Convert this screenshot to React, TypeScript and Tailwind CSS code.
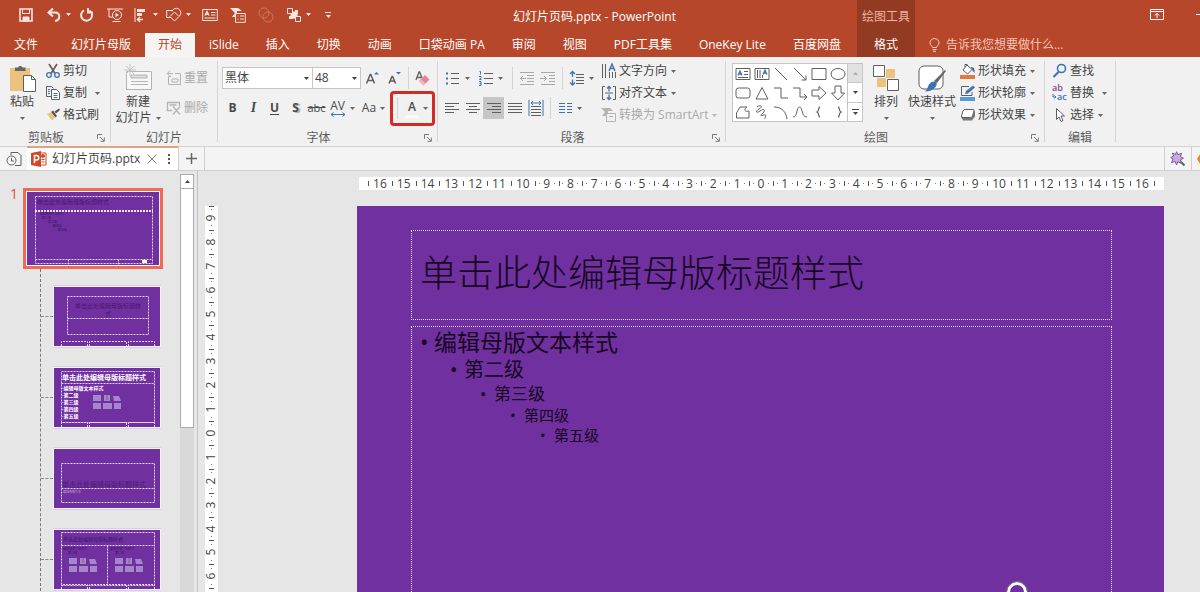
import type { ReactNode } from "react";
import clsx from "clsx";

const ink = "#5f5f5f";
const blue = "#3b74b0";
const faded = "#b4b4b4";

function Caret({ className }: { className?: string }) {
  return (
    <svg viewBox="0 0 5 3" className={clsx("w-[5px] h-[3px] shrink-0 fill-current", className)}>
      <path d="M0 0h5L2.5 3z" />
    </svg>
  );
}

function Glyph({ size = 16, children }: { size?: number; children: ReactNode }) {
  return (
    <svg width={size} height={size} viewBox={`0 0 ${size} ${size}`} fill="none" stroke={ink} className="shrink-0 overflow-visible">
      {children}
    </svg>
  );
}

function Divider() {
  return <div className="w-2 h-[22px] shrink-0 flex justify-center"><div className="w-px bg-[#d4d4d4]" /></div>;
}

/* ---------- title bar and tabs ---------- */

const quickAccess: { name: string; width: string; caret?: boolean; icon: ReactNode }[] = [
  {
    name: "保存",
    width: "w-8",
    icon: (
      <>
        <path d="M2 2h12v12H2z" strokeWidth="1.6" />
        <path d="M4.5 2v4.5h7V2" />
        <path d="M5 14v-4h6v4z" fill="currentColor" />
      </>
    ),
  },
  { name: "撤消", width: "w-8", caret: true, icon: <path d="M7 1.5 2.5 5.5 7 9.5M3 5.5h6c6 0 5.500 7.500 0 8.500" strokeWidth="2" /> },
  { name: "重复", width: "w-[26px]", icon: <path d="M10.500 3.500A5.500 5.500 0 1 1 5 3.300M9 1v4.500h5" strokeWidth="2" /> },
  {
    name: "放映",
    width: "w-[30px]",
    icon: (
      <>
        <path d="M0 2h16M2 2v8h4M5.500 14.500h8" />
        <circle cx="10" cy="8" r="4.500" />
        <path d="M8.500 5.800v4.400L12 8z" fill="currentColor" stroke="none" />
      </>
    ),
  },
  {
    name: "对齐",
    width: "w-[31px]",
    caret: true,
    icon: (
      <>
        <path d="M2 1v14" />
        <path d="M4 2h8v3H4zM4 6h5v3H4z" fill="currentColor" stroke="none" />
        <path d="M10 12.500H4.500M7 10l-2.500 2.500L7 15" strokeWidth="1.500" />
      </>
    ),
  },
  {
    name: "形状",
    width: "w-[34px]",
    caret: true,
    icon: (
      <>
        <path d="M6 3.500H.7v7H5" />
        <path d="M6 4.500a4.500 4.500 0 1 1 7.500 4.500" />
        <path d="m8.500 5 4.500 4.500L8.500 14 4 9.500z" />
      </>
    ),
  },
  {
    name: "文本框",
    width: "w-[30px]",
    icon: (
      <>
        <path d="M.7 2.500h14.600v11H.7zM9 5.500h4.500M9 8h4.500M2.500 11h11" />
        <path d="m3 8.500 2-4 2 4M3.800 7.300h2.400" strokeWidth="1.300" />
      </>
    ),
  },
  {
    name: "选择窗格",
    width: "w-[26px]",
    icon: (
      <>
        <path d="M0 1h8l4 3H7v6H2l3-4z" fill="currentColor" stroke="none" />
        <path d="M5.500 6.500h9.800v8.800H5.500zM7.500 9h1M10 9h4M7.500 12h1M10 12h4" fill="#b7472a" />
      </>
    ),
  },
  {
    name: "合并形状",
    width: "w-[30px]",
    icon: (
      <g opacity="0.300">
        <circle cx="6" cy="6" r="5" />
        <circle cx="10" cy="10" r="5" />
      </g>
    ),
  },
  {
    name: "排列",
    width: "w-[34px]",
    caret: true,
    icon: (
      <>
        <path d="M5 5h6v6H5z" fill="currentColor" />
        <path d="M1.500 1.500h5v5h-5zM9.500 9.500h5v5h-5z" fill="#b7472a" />
        <path d="M9 3h3v4h-3zM3 9h4v3H3z" fill="currentColor" stroke="none" />
      </>
    ),
  },
];

const tabs = ["幻灯片母版", "开始", "iSlide", "插入", "切换", "动画", "口袋动画 PA", "审阅", "视图", "PDF工具集", "OneKey Lite", "百度网盘"];

function Header() {
  return (
    <header className="flex h-[57px] shrink-0 bg-[#b7472a] text-white">
      <div className="flex flex-col shrink-0">
        <div className="flex items-center h-[33px] pl-2.5 pb-1 text-[#fbe6df]">
          {quickAccess.map((item) => (
            <button key={item.name} aria-label={item.name} className={clsx("flex items-center justify-center gap-1", item.width)}>
              <svg viewBox="0 0 16 16" fill="none" stroke="currentColor" className="size-4 shrink-0">
                {item.icon}
              </svg>
              {item.caret && <Caret />}
            </button>
          ))}
          <button aria-label="自定义快速访问工具栏" className="flex flex-col items-center gap-0.5 ml-1.5 w-3.5">
            <span className="w-1.5 h-px bg-current" />
            <Caret />
          </button>
          <div className="flex-1 text-center text-white leading-4 pt-1">幻灯片页码.pptx - PowerPoint</div>
        </div>
        <nav className="flex gap-px h-6">
          <button className="w-[57px] pl-3.5 text-left">文件</button>
          {tabs.map((tab) => (
            <button
              key={tab}
              className={clsx("px-[13px] whitespace-nowrap leading-5", tab === "开始" && "bg-[#f5f4f3] text-[#b7472a]")}
            >
              {tab}
            </button>
          ))}
        </nav>
      </div>
      <div className="flex flex-col w-[58px] ml-[3px] shrink-0 bg-[#933a22] text-center">
        <div className="h-[33px] leading-[34px] text-[#eeb29f]">绘图工具</div>
        <button className="h-6 leading-5">格式</button>
      </div>
      <div className="flex flex-col flex-1">
        <div className="flex items-center justify-end h-[33px] pb-1">
          <button aria-label="功能区显示选项" className="mr-8">
            <svg viewBox="0 0 14 11" fill="none" stroke="currentColor" className="w-3.5 h-[11px]">
              <path d="M.5.500h13v10H.5zM.5 2.500h13M7 9V4.500M4.800 6.500 7 4.300l2.200 2.200" />
            </svg>
          </button>
          <button aria-label="最小化" className="w-1 h-px bg-white" />
        </div>
        <label className="flex items-center h-6 pl-3.5 gap-1.5 text-[#f6d0c4]">
          <svg viewBox="0 0 11 14" fill="none" stroke="currentColor" className="w-[11px] h-3.5 shrink-0">
            <path d="M3.500 9.500C3.500 8 1 7.500 1 4.800a4.500 4.300 0 0 1 9 0C10 7.500 7.500 8 7.500 9.500zM3.500 11.500h4M4 13.300h3" />
          </svg>
          <input
            aria-label="告诉我"
            placeholder="告诉我您想要做什么..."
            className="w-36 bg-transparent outline-none placeholder:text-[#f3c5b6] placeholder:opacity-100"
          />
        </label>
      </div>
    </header>
  );
}

/* ---------- ribbon ---------- */

function Group({ label, width, launcher, children }: { label: string; width: string; launcher?: boolean; children: ReactNode }) {
  return (
    <section className={clsx("flex shrink-0", width)}>
      <div className="flex flex-col flex-1 min-w-0">
        <div className="flex h-[72px]">{children}</div>
        <div className="flex items-center h-[17px] pt-px text-[#5c5c5c]">
          <span className="flex-1 text-center">{label}</span>
          {launcher && (
            <button aria-label={`${label}设置`} className="flex justify-center w-[18px]">
              <svg viewBox="0 0 8 8" fill="none" stroke="#777" className="size-2">
                <path d="M.5 5V.5H5M3 3l4 4M7.300 3.500v3.800H3.500" />
              </svg>
            </button>
          )}
        </div>
      </div>
      <div className="w-px my-1 bg-[#d5d5d5]" />
    </section>
  );
}

function Row({ icon, label, caret, wide, disabled }: { icon: ReactNode; label: string; caret?: boolean; wide?: boolean; disabled?: boolean }) {
  return (
    <button className={clsx("flex items-center h-[22px] gap-0.5 whitespace-nowrap", disabled && "text-[#a9a9a9]")}>
      <Glyph>{icon}</Glyph>
      {label}
      {caret && <Caret className={wide ? "ml-1.5 opacity-80" : "ml-0.5 opacity-80"} />}
    </button>
  );
}

function Big({ icon, label, width, second }: { icon: ReactNode; label: string; width: string; second?: string }) {
  return (
    <button className={clsx("flex flex-col items-center pt-[7px] leading-4 shrink-0 whitespace-nowrap", width)}>
      <span className="mb-0.5">
        <Glyph size={28}>{icon}</Glyph>
      </span>
      {label}
      <span className="flex items-center gap-1 h-4">
        {second}
        <Caret className="opacity-80" />
      </span>
    </button>
  );
}

function Tool({ name, width = "w-[21px]", caret, active, children }: { name: string; width?: string; caret?: boolean; active?: boolean; children: ReactNode }) {
  return (
    <button aria-label={name} className={clsx("flex items-center justify-center gap-1 h-[22px] shrink-0", width, active && "bg-[#c6c6c6]")}>
      {children}
      {caret && <Caret className="opacity-80" />}
    </button>
  );
}

function Clipboard() {
  return (
    <Group label="剪贴板" width="w-[111px]" launcher>
      <Big
        width="w-9 ml-1"
        label="粘贴"
        icon={
          <>
            <path d="M2 4h20v23H2z" fill="#ecc37c" stroke="none" />
            <path d="M7 7V3.500h3a2.500 2.500 0 0 1 4.500 0h3V7z" fill="#666" stroke="none" />
            <path d="M15.500 11.500h8l4 4v12h-12z" fill="#fff" />
            <path d="M23.500 11.500v4h4" />
          </>
        }
      />
      <div className="pt-[3px] ml-[5px]">
        <Row
          label="剪切"
          icon={
            <>
              <path d="m4 1 6 9.500M12 1 6 10.500" strokeWidth="1.700" />
              <circle cx="4" cy="12" r="2.300" stroke={blue} strokeWidth="1.300" />
              <circle cx="12" cy="12" r="2.300" stroke={blue} strokeWidth="1.300" />
            </>
          }
        />
        <Row
          label="复制"
          caret
          wide
          icon={
            <>
              <path d="M6 11.500H1.500v-10h5l2 2" />
              <path d="M6.500 4.500h5l3 3v7h-8z" fill="#fff" />
              <path d="M3 4.500h2M3 6.500h2M3 8.500h2M8.500 8.500h4M8.500 10.500h4M8.500 12.500h4" stroke={blue} />
            </>
          }
        />
        <Row
          label="格式刷"
          icon={
            <>
              <path d="m2 7 5 6.500 3-3L6 5.500z" fill="#ecc37c" stroke="none" />
              <path d="m6 5 2-1.500L12 9l-1.500 1.500zM9.500 4.500 14 1.500l1 1.500-4 3.500z" fill="#555" stroke="none" />
            </>
          }
        />
      </div>
    </Group>
  );
}

function Slides() {
  return (
    <Group label="幻灯片" width="w-[107px]">
      <Big
        width="w-[54px]"
        label="新建"
        second="幻灯片"
        icon={
          <>
            <path d="M2.500 7.500h25v18h-25z" fill="#f8f8f8" stroke={faded} />
            <path d="M7 11h16v3H7zM7 17.500h17M7 20.500h17" fill="#ddd" stroke={faded} />
            <path d="M6 0v12M0 6h12M2 2l8 8M10 2l-8 8" stroke="#c4c4c4" />
          </>
        }
      />
      <div className="flex flex-col gap-2 pt-2.5 ml-px">
        <Row
          disabled
          label="重置"
          icon={<path d="M5 6.500H2.500v8h12v-11H9M1 3.500h6M4 .7 1.200 3.500 4 6.300M6 9h6v3H6z" stroke={faded} />}
        />
        <Row
          disabled
          label="删除"
          icon={<path d="M6 10.500H1.500v-8h12V6M7 6.500l7 8M14 6.500l-7 8M3.500 5h7" stroke={faded} strokeWidth="1.300" />}
        />
      </div>
    </Group>
  );
}

function Combo({ name, value, width }: { name: string; value: string; width: string }) {
  return (
    <div className={clsx("relative", width)}>
      <select
        aria-label={name}
        defaultValue={value}
        className="appearance-none w-full h-[22px] pl-0.5 leading-5 bg-white border border-[#c6c6c6] outline-none"
      >
        <option>{value}</option>
      </select>
      <Caret className="absolute right-1 top-2.5 pointer-events-none" />
    </div>
  );
}

function FontGroup() {
  return (
    <Group label="字体" width="w-[220px]" launcher>
      <div className="pt-1.5 pl-1">
        <div className="flex items-center h-[30px]">
          <Combo name="字体" value="黑体" width="w-[91px]" />
          <Combo name="字号" value="48" width="w-[49px] -ml-px" />
          <Tool name="增大字号" width="w-[22px]">
            <Glyph>
              <path d="m2.500 13.500 3.700-9h.6l3.700 9M4 10.500h5" strokeWidth="1.500" />
              <path d="M10 4.500h5L12.500 2z" fill={blue} stroke="none" />
            </Glyph>
          </Tool>
          <Tool name="减小字号">
            <Glyph>
              <path d="m3 13.500 3-7h.6l3 7M4 11h4.500" strokeWidth="1.500" />
              <path d="M10 2h5l-2.500 2.500z" fill={blue} stroke="none" />
            </Glyph>
          </Tool>
          <Divider />
          <Tool name="清除格式">
            <Glyph>
              <path d="m1 10 3-8h.6l2.400 6M2 7.500h4" strokeWidth="1.300" />
              <path d="m4 11 6-6 4.500 4.500-6 6z" fill="#e9839a" stroke="none" />
              <path d="m4 11 2-2 4.500 4.500-2 2z" fill="#f2b5c2" stroke="none" />
            </Glyph>
          </Tool>
        </div>
        <div className="flex items-center h-[30px] text-[#4a4a4a]">
          <Tool name="加粗"><b>B</b></Tool>
          <Tool name="倾斜"><i className="font-['Liberation_Serif'] font-bold text-sm">I</i></Tool>
          <Tool name="下划线"><b className="underline underline-offset-2">U</b></Tool>
          <Tool name="阴影"><b className="[text-shadow:2px_1px_1px_#aaa]">S</b></Tool>
          <Tool name="删除线"><s className="text-[11px]">abc</s></Tool>
          <Tool name="字符间距" width="w-[30px]" caret>
            <span className="flex flex-col items-center leading-3">
              AV
              <svg viewBox="0 0 16 5" fill="none" stroke={blue} className="w-4 h-[5px]">
                <path d="M1 2.500h14M3.500.5l-2.500 2 2.500 2M12.500.500l2.500 2-2.500 2" />
              </svg>
            </span>
          </Tool>
          <Tool name="更改大小写" width="w-[33px]" caret>Aa</Tool>
          <div className="flex items-center w-[45px] h-[35px] shrink-0 border-[3px] border-[#d32a25] rounded">
            <Divider />
            <Tool name="字体颜色" width="w-[31px]" caret>
              <span className="flex flex-col items-center w-3.5 leading-4 font-semibold border-b-[3px] border-[#fafafa]">A</span>
            </Tool>
          </div>
        </div>
      </div>
    </Group>
  );
}

function Paragraph() {
  return (
    <Group label="段落" width="w-[288px]" launcher>
      <div className="pt-1.5 w-[160px] shrink-0">
        <div className="flex items-center h-[30px] pl-[3px]">
          <Tool name="项目符号" width="w-8" caret>
            <Glyph>
              <path d="M6 3.500h8M6 8.500h8M6 13.500h8" />
              <path d="M1 2.500h2v2H1zM1 7.500h2v2H1zM1 12.500h2v2H1z" fill={blue} stroke="none" />
            </Glyph>
          </Tool>
          <Tool name="编号" width="w-[35px]" caret>
            <Glyph>
              <path d="M6 3.500h9M6 8.500h9M6 13.500h9" />
              <path d="M1.500 1.500h1v3M1 6.500h2v1L1.500 9.500H3.500M1 11.500h2v4H1M1.500 13.500H3" stroke={blue} />
            </Glyph>
          </Tool>
          <Divider />
          <Tool name="减少缩进">
            <Glyph><path d="M1 2.500h14M8 5.500h7M8 8.500h7M8 11.500h7M1 14.500h14M7 8.500H1.500M4 6 1.500 8.500 4 11" stroke="#a9a9a9" /></Glyph>
          </Tool>
          <Tool name="增加缩进">
            <Glyph><path d="M1 2.500h14M9 5.500h6M9 8.500h6M9 11.500h6M1 14.500h14M0 8.500h6M4 6l2.500 2.500L4 11" stroke="#a9a9a9" /></Glyph>
          </Tool>
          <Divider />
          <Tool name="行距" width="w-[30px]" caret>
            <Glyph>
              <path d="M7 4.500h8M7 7.500h8M7 10.500h8M7 13.500h8" />
              <path d="M3.500 7V1.500M1 4l2.500-2.500L6 4M3.500 9.500V15M1 12.500 3.500 15 6 12.500" stroke={blue} strokeWidth="1.300" />
            </Glyph>
          </Tool>
        </div>
        <div className="flex items-center h-[30px] pl-[3px]">
          <Tool name="左对齐"><Glyph><path d="M1 3.500h14M1 6.500h9M1 9.500h14M1 12.500h9" /></Glyph></Tool>
          <Tool name="居中"><Glyph><path d="M1 3.500h14M4 6.500h8M1 9.500h14M4 12.500h8" /></Glyph></Tool>
          <Tool name="右对齐" active><Glyph><path d="M1 3.500h14M6 6.500h9M1 9.500h14M6 12.500h9" /></Glyph></Tool>
          <Tool name="两端对齐"><Glyph><path d="M1 3.500h14M1 6.500h14M1 9.500h14M1 12.500h14" /></Glyph></Tool>
          <Tool name="分散对齐">
            <Glyph>
              <path d="M3 6.500h10M3 9.500h10M3 12.500h10M3 15.500h10" />
              <path d="M1 0v16M15 0v16M3 3h10M5 1 3 3l2 2M11 1l2 2-2 2" stroke={blue} />
            </Glyph>
          </Tool>
          <Divider />
          <Tool name="分栏" width="w-[30px]" caret>
            <Glyph><path d="M2 3.500h6M10 3.500h5M2 6.500h6M10 6.500h5M2 9.500h6M10 9.500h5M2 12.500h6M10 12.500h5" stroke={blue} /></Glyph>
          </Tool>
        </div>
      </div>
      <div className="pt-[3px] ml-[3px]">
        <Row
          caret
          label="文字方向"
          icon={
            <>
              <path d="M1.500 1v14M4.500 1v14M8.500 9v6M11.500 9v6M14.500 9v6" />
              <path d="m8 8 3-7 3 7M9 5.500h4" stroke={blue} strokeWidth="1.400" />
            </>
          }
        />
        <Row
          caret
          label="对齐文本"
          icon={
            <>
              <path d="M4 1.500H1.500v13H4M12 1.500h2.500v13H12M4 8h8" />
              <path d="M8 6.500V1.500M6 3.500l2-2 2 2M8 9.500v5M6 12.500l2 2 2-2" stroke={blue} strokeWidth="1.300" />
            </>
          }
        />
        <Row
          caret
          disabled
          label="转换为 SmartArt"
          icon={
            <>
              <path d="M0 1h9l3 3H7v5H1l3-4z" fill={faded} stroke="none" />
              <path d="M5.500 6.500h9v8h-9zM8 9.500h4" fill="#f1f1f1" stroke={faded} />
            </>
          }
        />
      </div>
    </Group>
  );
}

const shapes: { name: string; icon: ReactNode }[] = [
  { name: "文本框", icon: <><path d="M1 2.500h14v11H1zM9 5.500h4M9 8.500h4M3 11.500h10" /><path d="m3 9.500 2-4.500 2 4.500M4 8h2" stroke={blue} strokeWidth="1.300" /></> },
  { name: "竖排文本框", icon: <><path d="M1 2.500h14v11H1zM3.500 4v8M6 4v8M8.500 9v3" /><path d="m9 8.500 2-4.500 2 4.500M10 7h2" stroke={blue} strokeWidth="1.300" /></> },
  { name: "直线", icon: <path d="m2 2 12 12" /> },
  { name: "箭头", icon: <path d="m2 2 12 12M14 9.500V14H9.500" /> },
  { name: "矩形", icon: <path d="M1 2.500h14v11H1z" /> },
  { name: "椭圆", icon: <ellipse cx="8" cy="8" rx="7" ry="5.500" /> },
  { name: "圆角矩形", icon: <rect x="1" y="3" width="14" height="10" rx="2.500" /> },
  { name: "三角形", icon: <path d="M8 2.500 14 14H2z" /> },
  { name: "肘形连接符", icon: <path d="M1 3h7v10h7" /> },
  { name: "肘形箭头", icon: <path d="M1 3h7v9h7M12 9l3 3-3 3" /> },
  { name: "右箭头", icon: <path d="M1 5h7V1.500L15 8l-7 6.500V11H1z" /> },
  { name: "下箭头", icon: <path d="M5 1v7H1.500L8 15l6.500-7H11V1z" /> },
  { name: "任意多边形", icon: <path d="M5 3h7c-4 3-2 5 2 4v7H1.500V9z" /> },
  { name: "自由曲线", icon: <path d="M3 3c4-3 6 0 2 2s-3 5 1 2 6-1 3 2-3 3 1 2 0 4 1 4" /> },
  { name: "弧形", icon: <path d="M1 3c8 0 12 5 13 12" /> },
  { name: "曲线", icon: <path d="M1 13C6 13 4 3 7.500 3S9 13 15 13" /> },
  { name: "左大括号", icon: <path d="M9 3C7 3 8.500 7 6 8c2.500 1 1 5 3 5" strokeWidth="1.300" /> },
  { name: "右大括号", icon: <path d="M8 3c2 0 .5 4 3 5-2.500 1-1 5-3 5" strokeWidth="1.300" /> },
];

function Drawing() {
  return (
    <Group label="绘图" width="w-[319px]" launcher>
      <div className="flex h-[59px] mt-1.5 ml-1.5 bg-white border border-[#c6c6c6] shrink-0">
        <div className="grid grid-cols-6">
          {shapes.map((shape) => (
            <button key={shape.name} aria-label={shape.name} className="flex items-center justify-center size-[19px]">
              <Glyph>{shape.icon}</Glyph>
            </button>
          ))}
        </div>
        <div className="flex flex-col w-[15px] border-l border-[#c6c6c6] divide-y divide-[#c6c6c6]">
          <button aria-label="上一行" className="flex flex-1 items-center justify-center bg-[#e1e1e1] text-[#b0b0b0]">
            <Caret className="rotate-180" />
          </button>
          <button aria-label="下一行" className="flex flex-1 items-center justify-center"><Caret /></button>
          <button aria-label="其他" className="flex flex-col flex-1 items-center justify-center gap-0.5">
            <span className="w-[7px] h-px bg-current" />
            <Caret />
          </button>
        </div>
      </div>
      <Big
        width="w-10 ml-[3px]"
        label="排列"
        icon={
          <>
            <path d="M14 5h9v9h-9zM5 14h9v9H5z" fill="#ecc37c" stroke="none" />
            <path d="M1.500 1.500h11v11h-11zM15.500 15.500h11v11h-11z" fill="#fff" />
          </>
        }
      />
      <Big
        width="w-[52px]"
        label="快速样式"
        icon={
          <>
            <rect x="1" y="2" width="24" height="23" rx="5" fill="#fff" />
            <path d="m28 7-9 12-3-2L27 6z" fill="#666" stroke="none" />
            <path d="M16 17.500c3 0 4 3 1 6s-6 4-10 4c4-3 2-9 9-10z" fill={blue} stroke="none" />
          </>
        }
      />
      <div className="pt-[3px] ml-0.5">
        <Row
          caret
          label="形状填充"
          icon={
            <>
              <path d="M0 12h15v4H0z" fill="#e07b39" stroke="none" />
              <path d="m7 2 5 4.500L7.500 11 3 7zM5 4V1.500h2.500" fill="#fff" />
              <path d="M11 4c3 0 4 2 3.500 6L12 7z" fill={blue} stroke="none" />
            </>
          }
        />
        <Row
          caret
          label="形状轮廓"
          icon={
            <>
              <path d="M0 12h15v4H0z" fill="#5b9bd5" stroke="none" />
              <path d="M9 1.500H1.500v9H12V7" />
              <path d="m5 9 1-3 7-5.500 2 2-7 6z" fill={blue} stroke="none" />
            </>
          }
        />
        <Row
          caret
          label="形状效果"
          icon={
            <>
              <path d="M1 10 3 13.500h9l3-4V4z" fill="#7a7a7a" stroke="none" />
              <path d="M5 2.500h8q1.500 0 1 1.500l-1.500 5q-.5 1.500-2 1.500H3Q1 10.500 1.500 9L3 4q.5-1.500 2-1.500z" fill="#fff" />
            </>
          }
        />
      </div>
    </Group>
  );
}

function Editing() {
  return (
    <Group label="编辑" width="w-[71px]">
      <div className="pt-[3px] ml-[7px]">
        <Row
          label="查找"
          icon={
            <>
              <circle cx="9.500" cy="5.500" r="4" stroke={blue} strokeWidth="1.600" />
              <path d="m6.500 9-5 5" stroke={blue} strokeWidth="2.200" />
            </>
          }
        />
        <Row
          label="替换"
          caret
          wide
          icon={
            <>
              <text x="0" y="6" fontSize="9" fontWeight="600" fill="#7d4c92" stroke="none">ab</text>
              <text x="5" y="15" fontSize="9" fontWeight="600" fill={blue} stroke="none">ac</text>
              <path d="M1 9v3h3M2.500 10.500 4 12 2.500 13.500" stroke={blue} />
            </>
          }
        />
        <Row label="选择" caret icon={<path d="M4.500 1.500v11l2.500-2.500 2 4.500 2-1-2-4.500h3.500z" fill="#fff" />} />
      </div>
    </Group>
  );
}

/* ---------- document tabs ---------- */

function DocumentTabs() {
  return (
    <div className="flex h-6 shrink-0 bg-[#f4f4f4] border-b border-[#cfcfcf]">
      <button aria-label="历史文档" className="w-[27px] flex items-center justify-center">
        <Glyph>
          <path d="M5 4V1.500h7l3 3v10H9" />
          <circle cx="5.500" cy="9.500" r="4.500" />
          <path d="M5.500 7v3H8" />
        </Glyph>
      </button>
      <div className="flex items-center w-[151px] -mt-px pl-1 bg-white border-t-2 border-[#e5a27e]">
        <svg viewBox="0 0 16 16" className="size-4 shrink-0">
          <path d="M9 2h6v12H9z" fill="#fff" stroke="#d24726" />
          <path d="M10.500 8.500h3M10.500 11h3" stroke="#d24726" />
          <circle cx="12" cy="5" r="2" fill="#d24726" />
          <path d="M0 2 10 0v16L0 14z" fill="#d24726" />
          <path d="M3.500 12V4.500h2a2.200 2.200 0 0 1 0 4.500h-2" fill="none" stroke="#fff" strokeWidth="1.500" />
        </svg>
        <span className="ml-[5px] w-[95px] whitespace-nowrap">幻灯片页码.pptx</span>
        <button aria-label="关闭">
          <svg viewBox="0 0 10 10" stroke="#777" className="size-2.5"><path d="m.5.500 9 9M9.500.500l-9 9" /></svg>
        </button>
        <button aria-label="更多" className="ml-[11px]">
          <svg viewBox="0 0 2 10" fill="#555" className="w-0.5 h-2.5"><path d="M0 0h2v2H0zM0 4h2v2H0zM0 8h2v2H0z" /></svg>
        </button>
      </div>
      <button aria-label="新建文档" className="w-[27px] flex items-center justify-center border-x border-[#d0d0d0]">
        <svg viewBox="0 0 11 11" stroke="#666" className="size-[11px]"><path d="M5.500 0v11M0 5.500h11" strokeWidth="1.500" /></svg>
      </button>
      <div className="flex-1" />
      <button aria-label="美化" className="w-7 flex items-center justify-center border-x border-[#d0d0d0]">
        <Glyph>
          <path d="m9.500 9.500 5 5" strokeWidth="2" />
          <path d="m6.500.700 1.500 3 3.500-1.500-1 3.500 3 1.500-3 1.500.5 3.500-3.200-1.500L6.500 14l-1.300-3.500-3.700 1L3 8 .7 6.500 3.500 5.200 2.500 2l3 1.500z" fill="#c9a7ea" stroke="#76658c" />
        </Glyph>
      </button>
      <button aria-label="工具" className="w-2 flex items-center justify-end">
        <svg viewBox="0 0 3 10" fill="#e8862e" className="w-[3px] h-2.5"><path d="M3 0v10L0 5z" /></svg>
      </button>
    </div>
  );
}

/* ---------- thumbnails ---------- */

const titleHint = "单击此处编辑母版标题样式";
const dark = "#3d1560";

function Dashes({ d }: { d: string }) {
  return <path d={d} fill="none" stroke="#e3d3f0" strokeDasharray="2 1" />;
}

function Pictures({ x, y }: { x: number; y: number }) {
  return (
    <g transform={`translate(${x} ${y})`} fill="#a486cb">
      <path d="M0 0h8v6H0zM11 0h6v6h-6zM20 1h6l2 5h-7zM0 8h8v6H0zM10 8h9v6h-9zM21 8h7v6h-7z" />
      <path d="M13 0h2v5h-2z" fill="#8d7a8f" />
    </g>
  );
}

const footer = "M7.500 59v-4.500h26V59M35.500 59v-4.500h37V59M74.500 59v-4.500h26V59";

const layouts: { name: string; art: ReactNode }[] = [
  {
    name: "标题幻灯片",
    art: (
      <>
        <Dashes d="M13.500 9.500h81v38h-81zM13.500 31.500h81" />
        <g fill={dark} opacity="0.800">
          <text x="54" y="21" fontSize="6" textAnchor="middle">单击此处编辑母版标题样</text>
          <text x="54" y="29" fontSize="6" textAnchor="middle">式</text>
        </g>
        <Dashes d={footer} />
      </>
    ),
  },
  {
    name: "标题和内容",
    art: (
      <>
        <Dashes d="M7.500 3.500h93v51h-93zM7.500 15.500h93" />
        <g fill="#fff" fontWeight="700">
          <text x="8" y="12" fontSize="7">{titleHint}</text>
          <text x="8" y="22" fontSize="5">·编辑母版文本样式</text>
          <text x="8" y="29" fontSize="5">·第二级</text>
          <text x="8" y="36" fontSize="5">·第三级</text>
          <text x="8" y="43" fontSize="5">·第四级</text>
          <text x="8" y="50" fontSize="5">·第五级</text>
        </g>
        <Pictures x={39} y={27} />
        <Dashes d={footer} />
      </>
    ),
  },
  {
    name: "节标题",
    art: (
      <>
        <Dashes d="M7.500 14.500h93v39h-93zM7.500 39.500h93" />
        <text x="8" y="38" fontSize="7" fill={dark} opacity="0.700">{titleHint}</text>
        <text x="9" y="44" fontSize="3" fill="#c3a8dc">编辑母版文本</text>
      </>
    ),
  },
  {
    name: "两栏内容",
    art: (
      <>
        <Dashes d="M7.500 2.500h93v53h-93zM7.500 15.500h93M53.500 15.500v40" />
        <g fill={dark}>
          <text x="9" y="11" fontSize="5">{titleHint}</text>
          <text x="9" y="20" fontSize="3">编辑母版文本样式</text>
          <text x="14" y="24" fontSize="3">第二级</text>
          <text x="56" y="20" fontSize="3">编辑母版文本样式</text>
          <text x="61" y="24" fontSize="3">第二级</text>
        </g>
        <Pictures x={15} y={28} />
        <Pictures x={61} y={28} />
        <Dashes d={footer} />
      </>
    ),
  },
];

function Thumbnails() {
  return (
    <aside className="flex w-[198px] shrink-0 border-r border-[#c3c3c3]">
      <div className="w-[180px] pt-[17px] overflow-hidden">
        <div className="flex">
          <span className="w-[23px] pl-2.5 text-sm leading-3 text-[#d9533a]">1</span>
          <button aria-label="幻灯片母版" className="w-[140px] h-[81px] p-px bg-white border-3 border-[#ee6a52]">
            <svg viewBox="0 0 132 73" className="w-full h-full bg-[#7030a0]">
              <Dashes d="M8.500 4.500h117v67h-117zM8.500 67.500h117M41.500 67.500v5M91.500 67.500v5" />
              <path d="M8 19h118" stroke="#f1e8f8" strokeWidth="2" strokeDasharray="2 1" />
              <g fill={dark}>
                <text x="10" y="12" fontSize="6" opacity="0.800">{titleHint}</text>
                <text x="13" y="23" fontSize="3">编辑母版文本样式</text>
                <text x="14" y="27" fontSize="3">·第二级</text>
                <text x="20" y="31" fontSize="3">·第三级</text>
                <text x="25" y="35" fontSize="3">·第四级</text>
                <text x="30" y="39" fontSize="3">·第五级</text>
              </g>
              <path d="M115 68h5v3h-5z" fill="#fff" />
            </svg>
          </button>
        </div>
        <div className="flex flex-col gap-[18px] ml-10 pt-4 border-l border-dashed border-[#777]">
          {layouts.map((layout) => (
            <div key={layout.name} className="flex items-center">
              <div className="w-3 border-t border-dashed border-[#888]" />
              <button aria-label={layout.name} className="w-[108px] h-[63px] p-px bg-[#f7f2fa] border-y border-[#d8d0de]">
                <svg viewBox="0 0 106 59" className="w-full h-full bg-[#7030a0]">
                  {layout.art}
                </svg>
              </button>
            </div>
          ))}
        </div>
      </div>
      <div className="flex flex-col w-3.5 pt-[3px]">
        <button aria-label="向上滚动" className="flex items-center justify-center h-[15px] bg-white border border-[#ababab]">
          <Caret className="rotate-180" />
        </button>
        <div className="flex-1 bg-[#d9d9d9]">
          <div className="h-[239px] bg-white border border-t-0 border-[#ababab]" />
        </div>
      </div>
    </aside>
  );
}

/* ---------- editing area ---------- */

const across = Array.from({ length: 33 }, (_, i) => Math.abs(i - 16));
const down = Array.from({ length: 19 }, (_, i) => Math.abs(i - 9));

function HorizontalRuler() {
  return (
    <div className="flex h-[13px] mt-1.5 ml-[161px] mr-9 px-[9px] bg-white text-[#444] leading-3">
      {across.map((n, i) => (
        <div key={i} className="flex flex-1 items-center justify-between">
          <span className="w-px h-[5px] bg-[#555]" />
          <span className={clsx("size-px", n < 10 && "bg-[#777]")} />
          <span className="w-2 h-3 flex justify-center">{n}</span>
          <span className={clsx("size-px", n < 10 && "bg-[#777]")} />
          <span className="w-px" />
        </div>
      ))}
      <span className="w-px h-[5px] mt-1 bg-[#555]" />
    </div>
  );
}

function VerticalRuler() {
  return (
    <div className="flex flex-col w-[13px] h-[454px] ml-[7px] shrink-0 bg-white text-[#444]">
      {down.map((n, i) => (
        <div key={i} className="flex flex-col flex-1 items-center justify-between">
          <span className="w-[5px] h-px bg-[#555]" />
          <span className="size-px bg-[#777]" />
          <span className="flex items-center justify-center h-2.5 -rotate-90">{n}</span>
          <span className="size-px bg-[#777]" />
          <span className="h-px" />
        </div>
      ))}
    </div>
  );
}

const levels = [
  { text: "编辑母版文本样式", style: "text-[23px] leading-[30px]" },
  { text: "第二级", style: "pl-[30px] text-xl leading-[26px]" },
  { text: "第三级", style: "pl-[60px] text-[17px] leading-[22px]" },
  { text: "第四级", style: "pl-[90px] text-[15px] leading-5" },
  { text: "第五级", style: "pl-[120px] text-[15px] leading-5" },
];

function Slide() {
  return (
    <div className="relative flex flex-col flex-1 gap-1.5 ml-[139px] mr-9 pt-6 pl-[54px] pr-[52px] bg-[#7030a0] text-[#16061f]">
      <h1 className="flex items-center h-[90px] shrink-0 pl-2 pb-1 text-[37px] font-light border border-dotted border-[#e6d9f0]">
        {titleHint}
      </h1>
      <ul className="flex-1 pl-2 border border-b-0 border-dotted border-[#e6d9f0]">
        {levels.map((level) => (
          <li key={level.text} className={clsx("flex", level.style)}>
            <span className="w-3.5 shrink-0">•</span>
            {level.text}
          </li>
        ))}
      </ul>
      <span className="absolute -bottom-2.5 right-[137px] size-5 rounded-full border-[3px] border-white outline outline-[#777]" />
    </div>
  );
}

export default function App() {
  return (
    <div className="flex flex-col h-screen overflow-hidden bg-[#e6e6e6] text-xs text-[#444] font-['Open_Sans','Noto_Sans_CJK_SC',sans-serif]">
      <Header />
      <div className="flex h-[90px] shrink-0 bg-[#f1f1f1] border-b border-[#d2d2d2]">
        <Clipboard />
        <Slides />
        <FontGroup />
        <Paragraph />
        <Drawing />
        <Editing />
      </div>
      <DocumentTabs />
      <div className="flex flex-1 min-h-0">
        <Thumbnails />
        <main className="flex flex-col flex-1 min-w-0 overflow-hidden">
          <HorizontalRuler />
          <div className="flex flex-1 min-h-0 mt-4">
            <VerticalRuler />
            <Slide />
          </div>
        </main>
      </div>
    </div>
  );
}
